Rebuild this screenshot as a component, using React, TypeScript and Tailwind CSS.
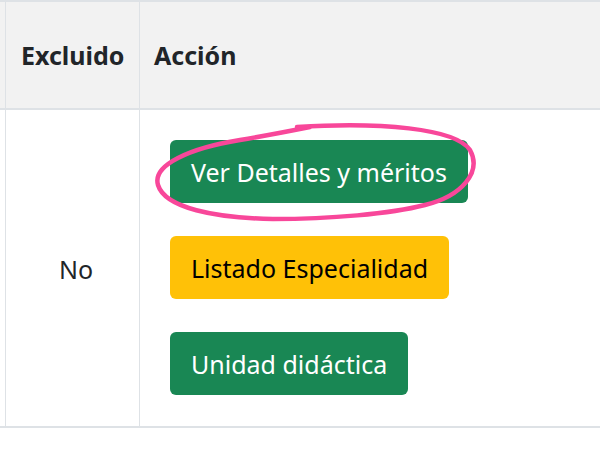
import React from "react";

const font = { fontFamily: '"Noto Sans", "Open Sans", sans-serif' };

function Circle() {
  return (
    <svg className="pointer-events-none absolute left-0 top-0" width={600} height={449} viewBox="0 0 600 449">
      <path
        d="M 297 127 C 380 122, 455 128, 470 150 C 482 172, 462 196, 425 205 C 390 214, 330 219, 273 219 C 215 218, 165 208, 158 185 C 152 165, 190 148, 240 140 C 270 135, 290 131, 310 127"
        fill="none"
        stroke="#f8479a"
        strokeWidth={4.5}
        strokeLinecap="round"
      />
    </svg>
  );
}

export default function App() {
  return (
    <div className="relative h-[449px] w-[600px] overflow-hidden bg-white text-[#212529]" style={font}>
      <div className="border-t-2 border-b-2 border-[#dee2e6]">
        <div className="flex h-[108px] bg-[#f2f2f2] border-b-2 border-[#dee2e6]">
          <div className="w-[6px] shrink-0 border-r border-[#dee2e6]" />
          <div className="flex w-[134px] shrink-0 items-center border-r border-[#dee2e6] pl-[15px] pt-[2px] text-[25px] font-bold">
            Excluido
          </div>
          <div className="flex flex-1 items-center pl-[14px] pt-[2px] text-[25px] font-bold">Acción</div>
        </div>
        <div className="flex h-[316px]">
          <div className="w-[6px] shrink-0 border-r border-[#dee2e6]" />
          <div className="flex w-[134px] shrink-0 items-center justify-center border-r border-[#dee2e6] pl-[7px] pt-[4px] text-[25px]">
            No
          </div>
          <div className="flex flex-1 flex-col items-start gap-[33px] pl-[30px] pt-[30px] text-[25px]">
            <button className="flex h-[63px] items-center rounded-[6px] bg-[#198754] px-[21px] pt-[2px] text-white">
              Ver Detalles y méritos
            </button>
            <button className="flex h-[63px] items-center rounded-[6px] bg-[#ffc107] px-[21px] pt-[2px] text-black">
              Listado Especialidad
            </button>
            <button className="flex h-[63px] items-center rounded-[6px] bg-[#198754] px-[21px] pt-[2px] text-white">
              Unidad didáctica
            </button>
          </div>
        </div>
      </div>
      <Circle />
    </div>
  );
}
